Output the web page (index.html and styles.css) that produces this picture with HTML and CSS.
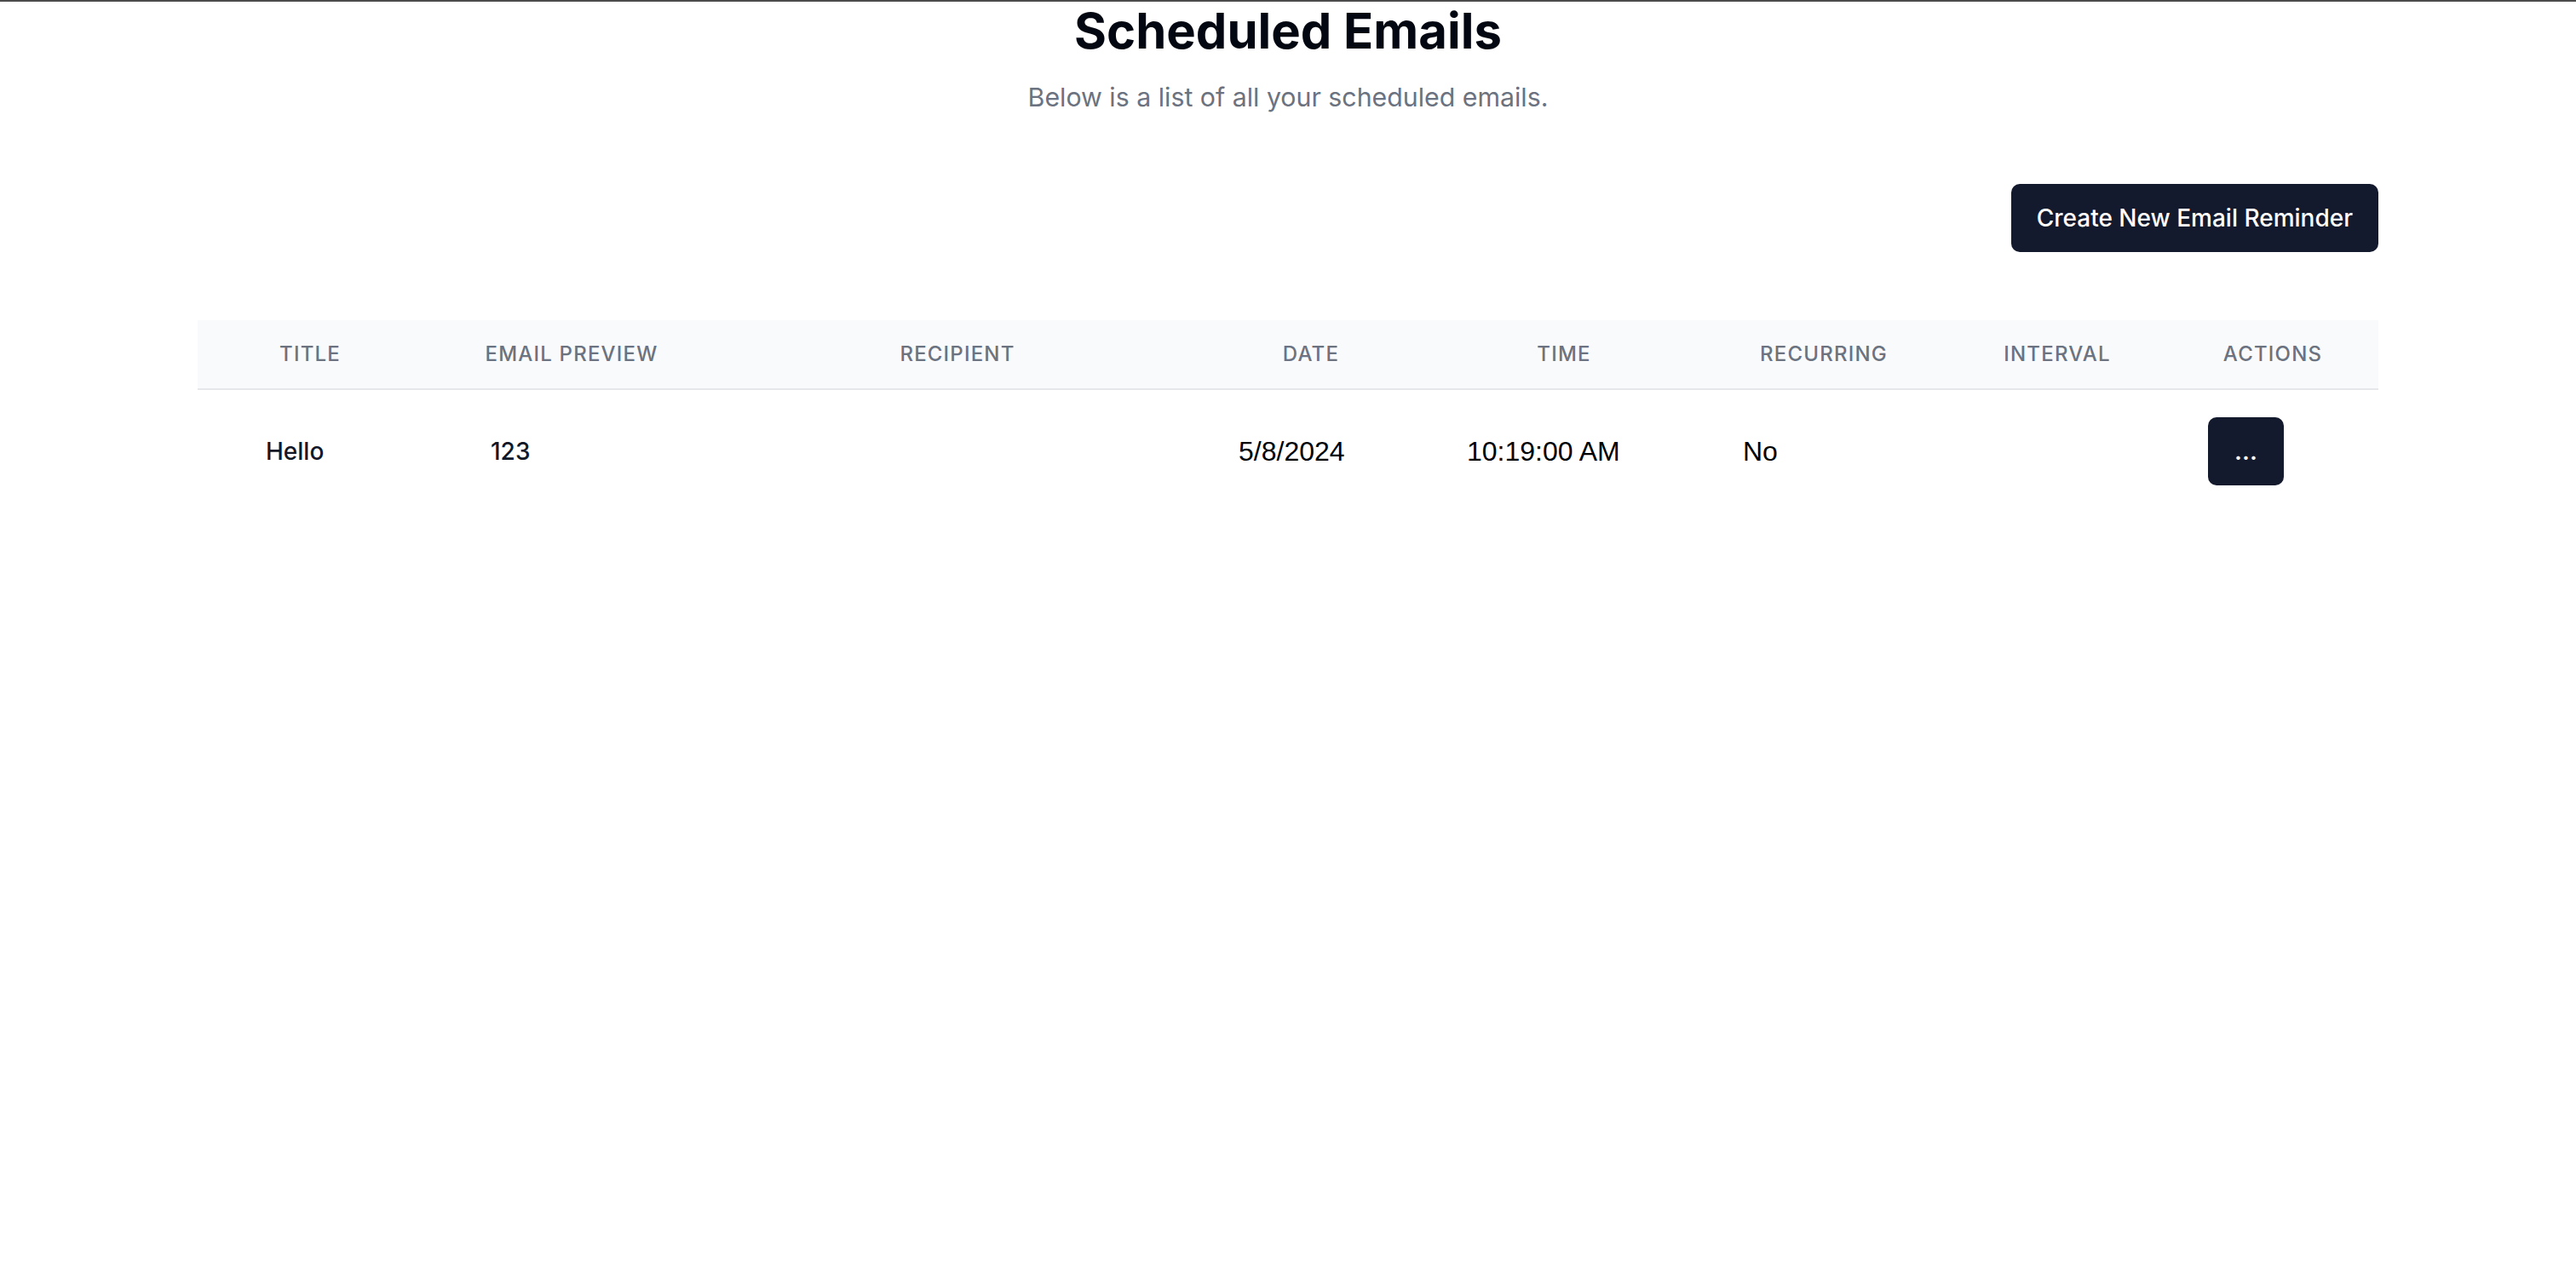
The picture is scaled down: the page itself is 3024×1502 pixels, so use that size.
FILE: index.html
```html
<!DOCTYPE html>
<html lang="en">
<head>
<meta charset="utf-8">
<title>Scheduled Emails</title>
<link rel="stylesheet" href="styles.css">
</head>
<body>
<div class="topline"></div>
<main class="page">
  <header class="page-header">
    <h1 class="title">Scheduled Emails</h1>
    <p class="subtitle">Below is a list of all your scheduled emails.</p>
  </header>
  <div class="toolbar">
    <button class="btn-primary">Create New Email Reminder</button>
  </div>
  <table class="emails">
    <colgroup>
      <col class="c1"><col class="c2"><col class="c3"><col class="c4">
      <col class="c5"><col class="c6"><col class="c7"><col class="c8">
    </colgroup>
    <thead>
      <tr>
        <th>Title</th>
        <th>Email Preview</th>
        <th>Recipient</th>
        <th>Date</th>
        <th>Time</th>
        <th>Recurring</th>
        <th>Interval</th>
        <th>Actions</th>
      </tr>
    </thead>
    <tbody>
      <tr>
        <td><span class="cell-inner">Hello</span></td>
        <td><span class="cell-inner">123</span></td>
        <td></td>
        <td class="plain">5/8/2024</td>
        <td class="plain time">10:19:00 AM</td>
        <td class="plain recurring">No</td>
        <td></td>
        <td><button class="btn-more">...</button></td>
      </tr>
    </tbody>
  </table>
</main>
</body>
</html>
```

FILE: styles.css
```css
html, body {
  margin: 0;
  padding: 0;
  background: #ffffff;
}
body {
  font-family: "Inter", "Noto Sans", sans-serif;
  color: #030712;
}
.topline {
  height: 2px;
  background: #4b4b4b;
}
.page {
  width: 2560px;
  margin: 0 auto;
}
.page-header {
  text-align: center;
}
.title {
  margin: 0;
  font-size: 58px;
  line-height: 68px;
  font-weight: 700;
  color: #030712;
}
.subtitle {
  margin: 24px 0 0;
  font-size: 30.3px;
  line-height: 40px;
  color: #6b7280;
}
.toolbar {
  display: flex;
  justify-content: flex-end;
  margin-top: 82px;
}
.btn-primary {
  height: 80px;
  padding: 0 30px;
  border: none;
  border-radius: 10px;
  background: #141a2e;
  color: #ffffff;
  font-family: "Inter", sans-serif;
  font-size: 28px;
  font-weight: 500;
}
.emails {
  margin-top: 80px;
  width: 2560px;
  table-layout: fixed;
  border-collapse: collapse;
}
.c1 { width: 264px; }
.c2 { width: 350px; }
.c3 { width: 556px; }
.c4 { width: 274px; }
.c5 { width: 320px; }
.c6 { width: 290px; }
.c7 { width: 258px; }
.c8 { width: 248px; }
.emails thead tr {
  background: #f9fafb;
  border-bottom: 2px solid #e5e7eb;
}
.emails th {
  height: 80px;
  padding: 0 24px;
  text-align: center;
  font-size: 24px;
  line-height: 32px;
  font-weight: 500;
  letter-spacing: 0.05em;
  text-transform: uppercase;
  color: #6b7280;
}
.emails td {
  padding: 32px 48px;
  text-align: left;
  vertical-align: middle;
  white-space: nowrap;
}
.cell-inner {
  padding-left: 32px;
  font-size: 28px;
  font-weight: 500;
  color: #111827;
}
.emails td.plain {
  padding-left: 52px;
  padding-right: 0;
  font-family: "Liberation Sans", Arial, sans-serif;
  font-size: 32px;
  color: #000000;
}
.emails td.time {
  padding-left: 46px;
}
.emails td.recurring {
  padding-left: 50px;
}
.btn-more {
  width: 89px;
  height: 80px;
  border: none;
  border-radius: 10px;
  background: #141a2e;
  color: #ffffff;
  font-family: "Inter", sans-serif;
  font-size: 28px;
  font-weight: 600;
  line-height: 1;
}
```
